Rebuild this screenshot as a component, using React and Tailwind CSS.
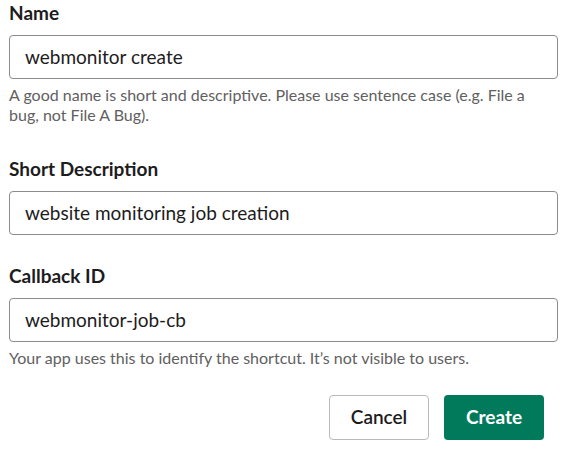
import React from "react";

const Field = ({ label, value, help, className = "" }) => (
  <div className={className}>
    <div className="text-[19px] leading-[26px] font-bold text-[#1d1c1d] mb-[9px]">
      {label}
    </div>
    <div className="h-[44px] border border-[#8d8c8d] rounded-[4px] flex items-center pl-[15px] text-[19px] text-[#1d1c1d]">
      {value}
    </div>
    {help && (
      <div className="mt-[6px] text-[16px] leading-[20px] text-[#616061]">
        {help}
      </div>
    )}
  </div>
);

export default function App() {
  return (
    <div
      className="w-[570px] h-[451px] bg-white pl-[9px] pr-[12px]"
      style={{ fontFamily: "Lato, 'Open Sans', sans-serif" }}
    >
      <Field
        label="Name"
        value="webmonitor create"
        help="A good name is short and descriptive. Please use sentence case (e.g. File a bug, not File A Bug)."
      />
      <Field
        className="mt-[31px]"
        label="Short Description"
        value="website monitoring job creation"
      />
      <Field
        className="mt-[28px]"
        label="Callback ID"
        value="webmonitor-job-cb"
        help="Your app uses this to identify the shortcut. It’s not visible to users."
      />
      <div className="flex justify-end gap-[15px] mt-[27px] pr-[14px]">
        <button className="w-[100px] h-[45px] rounded-[4px] border border-[#bbbabb] bg-white text-[19px] font-semibold text-[#1d1c1d]">
          Cancel
        </button>
        <button className="w-[100px] h-[45px] rounded-[4px] bg-[#007a5a] text-[19px] font-bold text-white">
          Create
        </button>
      </div>
    </div>
  );
}
